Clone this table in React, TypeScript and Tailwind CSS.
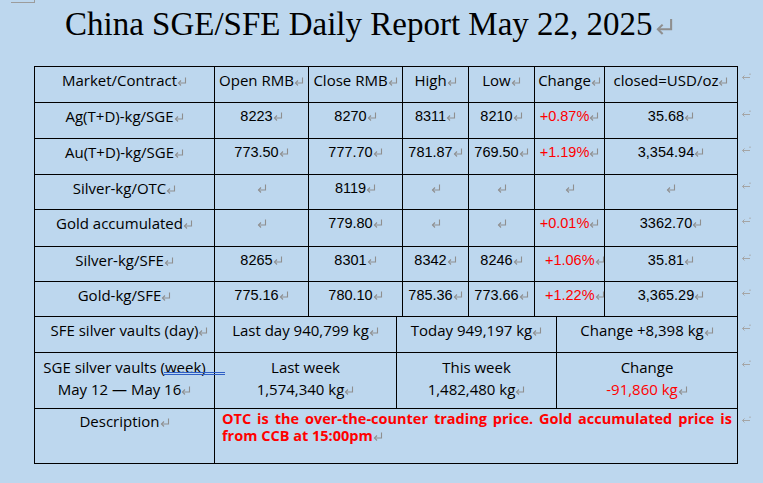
import React from "react";

const SANS = "font-['Open_Sans','Noto_Sans',sans-serif] text-[15px]";
const NUM = "font-['Liberation_Sans',Arial,sans-serif] text-[14.5px]";

const TOP_COLS = "grid grid-cols-[180px_94px_94px_66px_66px_70px_133px]";
const VAULT_COLS = "grid grid-cols-[180px_182px_160px_181px]";

type Row = { label: string; cells: string[]; change: string; usd: string; h: string; shift?: boolean };

const rows: Row[] = [
  { label: "Ag(T+D)-kg/SGE", cells: ["8223", "8270", "8311", "8210"], change: "+0.87%", usd: "35.68", h: "h-[36px]" },
  { label: "Au(T+D)-kg/SGE", cells: ["773.50", "777.70", "781.87", "769.50"], change: "+1.19%", usd: "3,354.94", h: "h-[36px]" },
  { label: "Silver-kg/OTC", cells: ["", "8119", "", ""], change: "", usd: "", h: "h-[35px]" },
  { label: "Gold accumulated", cells: ["", "779.80", "", ""], change: "+0.01%", usd: "3362.70", h: "h-[37px]" },
  { label: "Silver-kg/SFE", cells: ["8265", "8301", "8342", "8246"], change: "+1.06%", usd: "35.81", h: "h-[35px]", shift: true },
  { label: "Gold-kg/SFE", cells: ["775.16", "780.10", "785.36", "773.66"], change: "+1.22%", usd: "3,365.29", h: "h-[35px]", shift: true },
];

function Ret({ className = "w-[10px] h-[9px]" }: { className?: string }) {
  return (
    <svg viewBox="0 0 10 9" className={`inline-block align-baseline ${className}`} fill="none" stroke="#8f8f8f" strokeWidth="1.1">
      <path d="M8.5 0.5V6H1.5" />
      <path d="M4 3.5L1.5 6L4 8.5" />
    </svg>
  );
}

function RowMark() {
  return (
    <svg viewBox="0 0 10 8" className="w-[10px] h-[8px] mt-[7px] ml-[3px] shrink-0" fill="none" stroke="#a5a5a5" strokeWidth="1">
      <path d="M9 0.5V2" />
      <path d="M9 4.5H1.5" />
      <path d="M3.5 2.5L1.5 4.5L3.5 6.5" />
    </svg>
  );
}

function Cell({ h, className = "", children }: { h: string; className?: string; children?: React.ReactNode }) {
  return (
    <div className={`${h} border-r border-b border-black pt-[3px] leading-[21px] text-center whitespace-nowrap ${className}`}>
      {children}
      <Ret />
    </div>
  );
}

function TwoLine({ top, bottom, red }: { top: string; bottom: string; red?: boolean }) {
  return (
    <div className="h-[56px] border-r border-b border-black pt-[3px] leading-[22px] text-center whitespace-nowrap">
      {top}
      <br />
      <span className={red ? "text-[#ff0000]" : ""}>{bottom}</span>
      <Ret />
    </div>
  );
}

export default function App() {
  return (
    <div className="relative w-[763px] h-[483px] overflow-hidden bg-[#bdd7ee] text-black">
      <div className="absolute left-[11px] top-0 w-[24px] h-[3px] border-r border-b border-[#9c9c9c]" />

      <div className="h-[66px] pl-[65px] pt-[4px]">
        <h1 className="font-['Liberation_Serif','Times_New_Roman',serif] text-[33px] leading-[40px] font-normal whitespace-nowrap">
          China SGE/SFE Daily Report May 22, 2025
          <Ret className="w-[19px] h-[17px] ml-[2px]" />
        </h1>
      </div>

      <div className="ml-[34px]">
        <div className="flex">
          <div className={`${TOP_COLS} border-l border-t border-black ${SANS}`}>
            {["Market/Contract", "Open RMB", "Close RMB", "High", "Low", "Change", "closed=USD/oz"].map((t) => (
              <Cell key={t} h="h-[36px]">{t}</Cell>
            ))}
          </div>
          <RowMark />
        </div>

        {rows.map((r) => (
          <div key={r.label} className="flex">
            <div className={`${TOP_COLS} border-l border-black`}>
              <Cell h={r.h} className={SANS}>{r.label}</Cell>
              {r.cells.map((c, i) => (
                <Cell key={i} h={r.h} className={NUM}>{c}</Cell>
              ))}
              <Cell h={r.h} className={`${NUM} text-[#ff0000] ${r.shift ? "pl-[10px]" : ""}`}>{r.change}</Cell>
              <Cell h={r.h} className={NUM}>{r.usd}</Cell>
            </div>
            <RowMark />
          </div>
        ))}

        <div className="flex">
          <div className={`${VAULT_COLS} border-l border-black ${SANS}`}>
            <Cell h="h-[36px]" className="pl-[10px]">SFE silver vaults (day)</Cell>
            <Cell h="h-[36px]">Last day 940,799 kg</Cell>
            <Cell h="h-[36px]">Today 949,197 kg</Cell>
            <Cell h="h-[36px]">Change +8,398 kg</Cell>
          </div>
          <RowMark />
        </div>

        <div className="flex">
          <div className={`${VAULT_COLS} border-l border-black ${SANS}`}>
            <div className="relative h-[56px] border-r border-b border-black pt-[3px] leading-[22px] text-center whitespace-nowrap">
              SGE silver vaults (week)
              <br />
              May 12 — May 16<Ret />
              <span className="absolute left-[129px] top-[19px] w-[61px] h-[3px] border-t border-b border-[#2f5fc6]" />
            </div>
            <TwoLine top="Last week" bottom="1,574,340 kg" />
            <TwoLine top="This week" bottom="1,482,480 kg" />
            <TwoLine top="Change" bottom="-91,860 kg" red />
          </div>
          <RowMark />
        </div>

        <div className="flex">
          <div className={`grid grid-cols-[180px_523px] border-l border-black ${SANS}`}>
            <div className="h-[55px] border-r border-b border-black pt-[2px] leading-[21px] text-center">
              Description<Ret />
            </div>
            <div className="h-[55px] border-r border-b border-black pt-[1px] pl-[7px] pr-[5px] text-[14.5px] leading-[17px] font-bold text-[#ff0000]">
              <p className="[text-align-last:justify] whitespace-nowrap">
                OTC is the over-the-counter trading price. Gold accumulated price is
              </p>
              <p>
                from CCB at 15:00pm<Ret />
              </p>
            </div>
          </div>
          <RowMark />
        </div>
      </div>
    </div>
  );
}
